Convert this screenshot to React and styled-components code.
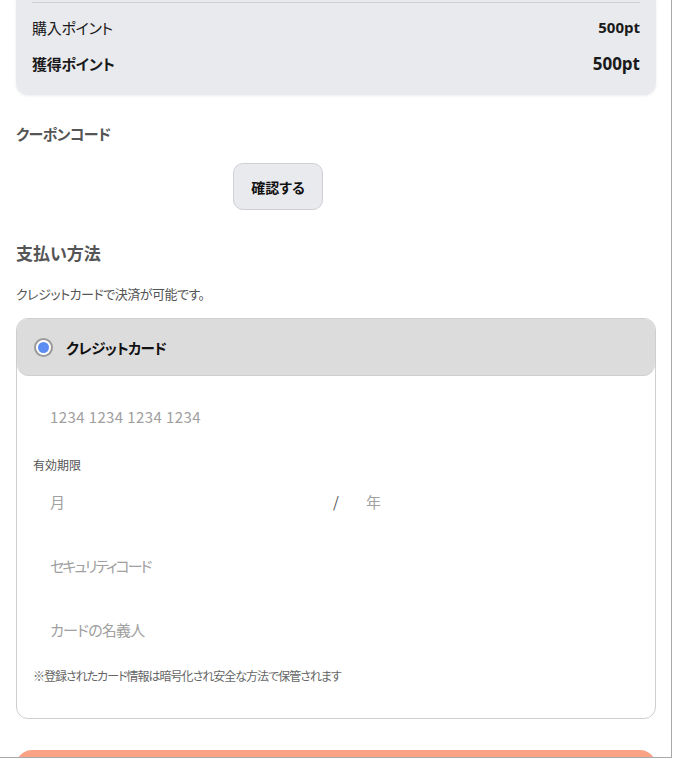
import React from "react";
import styled, { createGlobalStyle } from "styled-components";

const Global = createGlobalStyle`
  html, body { margin: 0; padding: 0; background: #fff; }
  body {
    font-family: "Noto Sans CJK JP", "Noto Sans", sans-serif;
    font-feature-settings: "palt";
    color: #222;
  }
  * { box-sizing: border-box; }
`;

const Frame = styled.div`
  width: 672px;
  height: 758px;
  border-right: 1px solid #a8a8a8;
  border-bottom: 1px solid #a8a8a8;
  overflow: hidden;
  padding: 0 15px 0 16px;
  display: flex;
  flex-direction: column;
  & > * { flex: none; }
`;

const Summary = styled.div`
  background: #e9eaee;
  border-radius: 0 0 12px 12px;
  box-shadow: 0 1px 3px rgba(0, 0, 0, 0.08);
  padding: 2px 16px 20px;
  display: flex;
  flex-direction: column;
  gap: 12px;
`;

const Divider = styled.div`
  height: 1px;
  background: #cfd0d4;
`;

const Row = styled.div`
  display: flex;
  justify-content: space-between;
  align-items: center;
  height: 24px;
  font-size: 15px;
  letter-spacing: -0.3px;
  font-weight: ${(p) => (p.$strong ? 700 : 400)};
  color: #1a1a1a;
`;

const Value = styled.span`
  font-family: "Open Sans", "Noto Sans", sans-serif;
  font-weight: 700;
  letter-spacing: 0;
  font-size: ${(p) => (p.$big ? "17px" : "15px")};
`;

const SectionTitle = styled.h2`
  margin: ${(p) => p.$mt} 0 0;
  font-size: ${(p) => p.$size};
  line-height: ${(p) => p.$lh};
  letter-spacing: ${(p) => p.$ls || "0"};
  font-weight: 700;
  color: #555;
`;

const CouponRow = styled.div`
  display: flex;
  gap: 8px;
  margin-top: 17px;
`;

const CouponInput = styled.input`
  width: 209px;
  height: 47px;
  border: none;
  outline: none;
  background: transparent;
  font: inherit;
`;

const ConfirmButton = styled.button`
  width: 90px;
  height: 47px;
  border: 1px solid #cfd0d4;
  border-radius: 10px;
  background: #e9eaee;
  font-family: "Noto Sans CJK JP", sans-serif;
  font-feature-settings: "palt";
  font-weight: 700;
  font-size: 14px;
  color: #111;
`;

const Description = styled.p`
  margin: 18px 0 0;
  font-size: 13px;
  line-height: 20px;
  letter-spacing: -0.5px;
  color: #555;
`;

const MethodCard = styled.div`
  margin-top: 14px;
  border: 1px solid #cfcfcf;
  border-radius: 12px;
  overflow: hidden;
`;

const MethodHeader = styled.label`
  display: flex;
  align-items: center;
  gap: 13px;
  height: 57px;
  padding-left: 17px;
  background: #dcdcdc;
  border-bottom: 1px solid #cfcfcf;
  border-radius: 0 0 12px 12px;
  font-size: 14.5px;
  letter-spacing: -0.6px;
  font-weight: 700;
  color: #111;
`;

const Radio = styled.span`
  width: 19px;
  height: 19px;
  border-radius: 50%;
  border: 2px solid #9a9a9a;
  background: #fff;
  display: flex;
  align-items: center;
  justify-content: center;
  &::after {
    content: "";
    width: 11px;
    height: 11px;
    border-radius: 50%;
    background: #5b8ef0;
  }
`;

const Body = styled.div`
  display: flex;
  flex-direction: column;
  gap: 16px;
  padding: 16px 16px 33px;
`;

const Field = styled.input`
  width: 100%;
  min-width: 0;
  height: 48px;
  border: none;
  outline: none;
  padding: 0 17px;
  font-family: "Noto Sans CJK JP", "Noto Sans", sans-serif;
  font-feature-settings: "palt";
  font-size: 15px;
  letter-spacing: ${(p) => p.$ls || "0"};
  color: #222;
  background: transparent;
  &::placeholder { color: #a0a0a0; }
`;

const Group = styled.div`
  display: flex;
  flex-direction: column;
  gap: 3px;
`;

const SmallLabel = styled.span`
  font-size: 12px;
  line-height: 18px;
  color: #555;
`;

const ExpiryRow = styled.div`
  display: flex;
  align-items: center;
`;

const Slash = styled.span`
  flex: none;
  width: 26px;
  text-align: center;
  font-size: 15px;
  color: #555;
`;

const Note = styled.p`
  margin: -2px 0 0;
  font-size: 12px;
  line-height: 18px;
  letter-spacing: -1px;
  color: #666;
`;

const SubmitButton = styled.button`
  margin-top: 31px;
  height: 52px;
  border: none;
  border-radius: 16px;
  background: #f9a285;
`;

export default function App() {
  return (
    <>
      <Global />
      <Frame>
        <Summary>
          <Divider />
          <Row>
            <span>購入ポイント</span>
            <Value>500pt</Value>
          </Row>
          <Row $strong>
            <span>獲得ポイント</span>
            <Value $big>500pt</Value>
          </Row>
        </Summary>

        <SectionTitle $mt="27px" $size="15px" $lh="24px" $ls="-0.6px">クーポンコード</SectionTitle>
        <CouponRow>
          <CouponInput aria-label="クーポンコード" />
          <ConfirmButton>確認する</ConfirmButton>
        </CouponRow>

        <SectionTitle $mt="30px" $size="17px" $lh="26px">支払い方法</SectionTitle>
        <Description>クレジットカードで決済が可能です。</Description>

        <MethodCard>
          <MethodHeader>
            <Radio />
            クレジットカード
          </MethodHeader>
          <Body>
            <Field placeholder="1234 1234 1234 1234" $ls="0.4px" />
            <Group>
              <SmallLabel>有効期限</SmallLabel>
              <ExpiryRow>
                <Field placeholder="月" />
                <Slash>/</Slash>
                <Field placeholder="年" />
              </ExpiryRow>
            </Group>
            <Field placeholder="セキュリティコード" $ls="-2px" />
            <Field placeholder="カードの名義人" $ls="-0.8px" />
            <Note>※登録されたカード情報は暗号化され安全な方法で保管されます</Note>
          </Body>
        </MethodCard>

        <SubmitButton aria-label="submit" />
      </Frame>
    </>
  );
}
